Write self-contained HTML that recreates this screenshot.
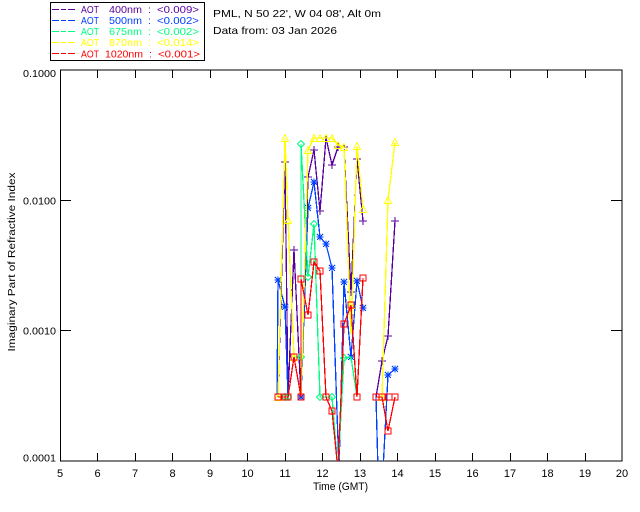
<!DOCTYPE html>
<html><head><meta charset="utf-8"><style>
html,body{margin:0;padding:0;background:#fff}
svg{display:block}
text{font-family:"Liberation Sans",sans-serif;font-size:10.5px;fill:#000}
.l{fill:none;stroke-width:1.3;shape-rendering:crispEdges}
.m{fill:none;stroke-width:1;shape-rendering:crispEdges}
</style></head><body>
<svg width="640" height="512" viewBox="0 0 640 512" xmlns="http://www.w3.org/2000/svg">
<defs>
<clipPath id="c"><rect x="60" y="70" width="562" height="391"/></clipPath>
<g id="plus"><path d="M-4 0H4M0 -4V4"/></g>
<g id="star"><path d="M-3.5 0H3.5M0 -3.5V3.5M-3 -3L3 3M-3 3L3 -3"/></g>
<g id="dia"><path d="M0 -3.5L3.5 0L0 3.5L-3.5 0Z"/></g>
<g id="tri"><path d="M0 -3.5L3.5 3.5H-3.5Z"/></g>
<g id="sq"><path d="M-3 -3H3V3H-3Z"/></g>
</defs>
<rect x="50.5" y="2.5" width="154" height="58" fill="#fff" stroke="#000" stroke-width="1" shape-rendering="crispEdges"/>
<g stroke-width="1" shape-rendering="crispEdges">
<path d="M52 9.5h7M61 9.5h5M68 9.5h7" stroke="#5a00a0"/>
<path d="M52 20.5h7M61 20.5h5M68 20.5h7" stroke="#0040ff"/>
<path d="M52 31.5h7M61 31.5h5M68 31.5h7" stroke="#00ff80"/>
<path d="M52 42.5h7M61 42.5h5M68 42.5h7" stroke="#ffff00"/>
<path d="M52 53.5h7M61 53.5h5M68 53.5h7" stroke="#ff0000"/>
</g>
<g lengthAdjust="spacingAndGlyphs">
<text x="81" y="13" style="fill:#5a00a0" textLength="18" lengthAdjust="spacingAndGlyphs">AOT</text><text x="109" y="13" style="fill:#5a00a0" textLength="33" lengthAdjust="spacingAndGlyphs">400nm</text><text x="148" y="13" style="fill:#5a00a0">:</text><text x="157" y="13" style="fill:#5a00a0" textLength="42" lengthAdjust="spacingAndGlyphs">&lt;0.009&gt;</text>
<text x="81" y="24" style="fill:#0040ff" textLength="18" lengthAdjust="spacingAndGlyphs">AOT</text><text x="109" y="24" style="fill:#0040ff" textLength="33" lengthAdjust="spacingAndGlyphs">500nm</text><text x="148" y="24" style="fill:#0040ff">:</text><text x="157" y="24" style="fill:#0040ff" textLength="42" lengthAdjust="spacingAndGlyphs">&lt;0.002&gt;</text>
<text x="81" y="35" style="fill:#00ff80" textLength="18" lengthAdjust="spacingAndGlyphs">AOT</text><text x="109" y="35" style="fill:#00ff80" textLength="33" lengthAdjust="spacingAndGlyphs">675nm</text><text x="148" y="35" style="fill:#00ff80">:</text><text x="157" y="35" style="fill:#00ff80" textLength="42" lengthAdjust="spacingAndGlyphs">&lt;0.002&gt;</text>
<text x="81" y="46" style="fill:#ffff00" textLength="18" lengthAdjust="spacingAndGlyphs">AOT</text><text x="109" y="46" style="fill:#ffff00" textLength="33" lengthAdjust="spacingAndGlyphs">870nm</text><text x="148" y="46" style="fill:#ffff00">:</text><text x="157" y="46" style="fill:#ffff00" textLength="42" lengthAdjust="spacingAndGlyphs">&lt;0.014&gt;</text>
<text x="81" y="57.5" style="fill:#ff0000" textLength="18" lengthAdjust="spacingAndGlyphs">AOT</text><text x="105" y="57.5" style="fill:#ff0000" textLength="38" lengthAdjust="spacingAndGlyphs">1020nm</text><text x="149" y="57.5" style="fill:#ff0000">:</text><text x="158" y="57.5" style="fill:#ff0000" textLength="42" lengthAdjust="spacingAndGlyphs">&lt;0.001&gt;</text>
</g>
<text x="213" y="17" textLength="168" lengthAdjust="spacingAndGlyphs">PML, N 50 22', W 04 08', Alt 0m</text>
<text x="213" y="34" textLength="124" lengthAdjust="spacingAndGlyphs">Data from: 03 Jan 2026</text>

<rect x="60.5" y="70" width="561.5" height="391" fill="none" stroke="#000" stroke-width="1" shape-rendering="crispEdges"/>
<path stroke="#000" stroke-width="1" shape-rendering="crispEdges" fill="none" d="M97.5 70v8M135.5 70v8M172.5 70v8M210.5 70v8M247.5 70v8M285.5 70v8M322.5 70v8M360.5 70v8M397.5 70v8M435.5 70v8M472.5 70v8M510.5 70v8M547.5 70v8M585.5 70v8M97.5 461v-8M135.5 461v-8M172.5 461v-8M210.5 461v-8M247.5 461v-8M285.5 461v-8M322.5 461v-8M360.5 461v-8M397.5 461v-8M435.5 461v-8M472.5 461v-8M510.5 461v-8M547.5 461v-8M585.5 461v-8M60 200.5h11M60 330.5h11M622 200.5h-11M622 330.5h-11"/>

<g clip-path="url(#c)">
<g stroke="#5a00a0">
<polyline class="l" points="278,397 285,162 288,397 294,250 301,397 308,177 314,150 320,211 326,138 332,165 338,147 344,147 351,292 357,159 363,221"/>
<polyline class="l" points="376,397 382,361 388,336 395,221"/>
<g class="m"><use href="#plus" x="285" y="162"/><use href="#plus" x="294" y="250"/><use href="#plus" x="308" y="177"/><use href="#plus" x="314" y="150"/><use href="#plus" x="320" y="211"/><use href="#plus" x="326" y="138"/><use href="#plus" x="332" y="165"/><use href="#plus" x="338" y="147"/><use href="#plus" x="344" y="147"/><use href="#plus" x="351" y="292"/><use href="#plus" x="357" y="159"/><use href="#plus" x="363" y="221"/><use href="#plus" x="382" y="361"/><use href="#plus" x="388" y="336"/><use href="#plus" x="395" y="221"/></g>
</g>
<g stroke="#0040ff">
<polyline class="l" points="277,397 278,280 285,307 288,397 294,357 301,397 308,208 314,182 320,237 326,244 332,268 339,470 344,282 351,357 357,281 363,308"/>
<polyline class="l" points="376,397 378,470 383,470 388,375 395,369"/>
<g class="m"><use href="#star" x="278" y="280"/><use href="#star" x="285" y="307"/><use href="#star" x="308" y="208"/><use href="#star" x="314" y="182"/><use href="#star" x="320" y="237"/><use href="#star" x="326" y="244"/><use href="#star" x="332" y="268"/><use href="#star" x="344" y="282"/><use href="#star" x="351" y="357"/><use href="#star" x="357" y="281"/><use href="#star" x="363" y="308"/><use href="#star" x="388" y="375"/><use href="#star" x="395" y="369"/><use href="#star" x="301" y="397"/></g>
</g>
<g stroke="#00ff80">
<polyline class="l" points="278,397 285,397 288,397 294,357 301,357 301,144 308,277 314,224 320,397 326,397 332,397 338,470 344,358 351,357 357,397 363,278"/>
<g class="m"><use href="#dia" x="301" y="144"/><use href="#dia" x="301" y="357"/><use href="#dia" x="308" y="277"/><use href="#dia" x="314" y="224"/><use href="#dia" x="320" y="397"/><use href="#dia" x="332" y="397"/><use href="#dia" x="344" y="358"/><use href="#dia" x="285" y="397"/><use href="#dia" x="288" y="397"/></g>
</g>
<g stroke="#ffff00">
<polyline class="l" points="278,397 285,138 288,220 294,357 301,397 308,150 314,138 320,138 326,138 332,138 338,145 344,147 351,335 357,146 363,209"/>
<polyline class="l" points="376,397 382,397 388,200 395,142"/>
<g class="m"><use href="#tri" x="285" y="138"/><use href="#tri" x="288" y="220"/><use href="#tri" x="308" y="150"/><use href="#tri" x="314" y="138"/><use href="#tri" x="320" y="138"/><use href="#tri" x="326" y="138"/><use href="#tri" x="332" y="138"/><use href="#tri" x="338" y="145"/><use href="#tri" x="344" y="147"/><use href="#tri" x="351" y="305"/><use href="#tri" x="357" y="146"/><use href="#tri" x="363" y="209"/><use href="#tri" x="388" y="200"/><use href="#tri" x="395" y="142"/><use href="#tri" x="278" y="397"/><use href="#tri" x="294" y="357"/><use href="#tri" x="382" y="397"/></g>
</g>
<g stroke="#ff0000">
<polyline class="l" points="278,397 285,397 288,397 294,357 301,397 301,279 308,315 314,262 320,271 326,397 332,411 338,470 344,324 351,305 357,397 363,278"/>
<polyline class="l" points="376,397 382,397 388,431 395,397"/>
<g class="m"><use href="#sq" x="278" y="397"/><use href="#sq" x="285" y="397"/><use href="#sq" x="288" y="397"/><use href="#sq" x="294" y="357"/><use href="#sq" x="301" y="397"/><use href="#sq" x="301" y="279"/><use href="#sq" x="308" y="315"/><use href="#sq" x="314" y="262"/><use href="#sq" x="320" y="271"/><use href="#sq" x="326" y="397"/><use href="#sq" x="332" y="411"/><use href="#sq" x="344" y="324"/><use href="#sq" x="351" y="305"/><use href="#sq" x="357" y="397"/><use href="#sq" x="363" y="278"/><use href="#sq" x="376" y="397"/><use href="#sq" x="382" y="397"/><use href="#sq" x="389" y="397"/><use href="#sq" x="395" y="397"/><use href="#sq" x="388" y="431"/></g>
</g>
</g>

<text x="23" y="77" textLength="33" lengthAdjust="spacingAndGlyphs">0.1000</text>
<text x="23" y="204.500" textLength="33" lengthAdjust="spacingAndGlyphs">0.0100</text>
<text x="23" y="334.500" textLength="33" lengthAdjust="spacingAndGlyphs">0.0010</text>
<text x="23" y="461.500" textLength="33" lengthAdjust="spacingAndGlyphs">0.0001</text>
<g text-anchor="middle" style="font-size:11px">
<text x="60" y="477" style="font-size:11px">5</text><text x="97.500" y="477" style="font-size:11px">6</text><text x="135" y="477" style="font-size:11px">7</text><text x="172.500" y="477" style="font-size:11px">8</text><text x="210" y="477" style="font-size:11px">9</text><text x="247.500" y="477" style="font-size:11px">10</text><text x="285" y="477" style="font-size:11px">11</text><text x="322.500" y="477" style="font-size:11px">12</text><text x="360" y="477" style="font-size:11px">13</text><text x="397.500" y="477" style="font-size:11px">14</text><text x="435" y="477" style="font-size:11px">15</text><text x="472.500" y="477" style="font-size:11px">16</text><text x="510" y="477" style="font-size:11px">17</text><text x="547.500" y="477" style="font-size:11px">18</text><text x="585" y="477" style="font-size:11px">19</text><text x="622" y="477" style="font-size:11px">20</text>
</g>
<text x="313" y="490" textLength="55" lengthAdjust="spacingAndGlyphs" style="font-size:11px">Time (GMT)</text>
<text transform="translate(15 351.500) rotate(-90)" x="0" y="0" textLength="179" lengthAdjust="spacingAndGlyphs">Imaginary Part of Refractive Index</text>
</svg>
</body></html>
